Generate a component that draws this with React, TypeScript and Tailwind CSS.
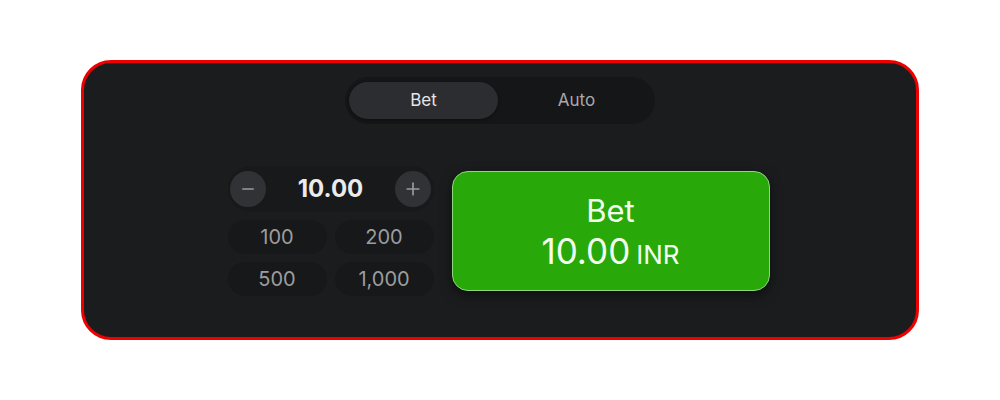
import { Minus, Plus } from 'lucide-react';

const quick = ['100', '200', '500', '1,000'];

export default function App() {
  return (
    <div
      className="flex h-[400px] w-full items-center justify-center bg-white"
      style={{ fontFamily: 'Inter, "Noto Sans", sans-serif' }}
    >
      <div className="flex h-[280px] w-[838px] flex-col items-center rounded-[30px] border-[3px] border-[#ee0000] bg-[#1b1c1e] pt-[14px]">
        <div className="flex h-[47px] w-[310px] items-center gap-[4px] rounded-full bg-[#151617] px-[4px]">
          <button className="h-[37px] w-[150px] rounded-full bg-[#2c2d30] text-[17px] text-[#e6e6e6] shadow-[0_1px_3px_rgba(0,0,0,0.4)]">
            Bet
          </button>
          <button className="h-[37px] w-[150px] rounded-full text-[17px] text-[#a8a9ab]">
            Auto
          </button>
        </div>

        <div className="mt-[42px] flex items-start gap-[18px] pr-[3px]">
          <div className="flex w-[206px] flex-col gap-[8px]">
            <div className="flex h-[46px] items-center justify-between rounded-full bg-[#18191b] px-[2px]">
              <button className="flex h-[36px] w-[36px] items-center justify-center rounded-full bg-[#313235] text-[#9a9b9e]">
                <Minus size={18} strokeWidth={2} />
              </button>
              <span className="text-[24px] font-bold text-[#ebebeb]">10.00</span>
              <button className="flex h-[36px] w-[36px] items-center justify-center rounded-full bg-[#313235] text-[#9a9b9e]">
                <Plus size={20} strokeWidth={2} />
              </button>
            </div>
            <div className="grid grid-cols-2 gap-x-[8px] gap-y-[8px]">
              {quick.map((q) => (
                <button
                  key={q}
                  className="h-[34px] rounded-full bg-[#17181a] text-[20px] text-[#9c9d9f]"
                >
                  {q}
                </button>
              ))}
            </div>
          </div>

          <button className="mt-[5px] flex h-[120px] w-[318px] flex-col items-center justify-center rounded-[16px] border border-[#8ed77c] bg-[#28a909] pt-[4px] text-[#f2fff0] shadow-[0_4px_12px_rgba(0,0,0,0.5)]">
            <span className="text-[31px] leading-[40px]">Bet</span>
            <span className="flex items-baseline gap-[6px] leading-[40px]">
              <span className="text-[35px]">10.00</span>
              <span className="text-[26px]">INR</span>
            </span>
          </button>
        </div>
      </div>
    </div>
  );
}
